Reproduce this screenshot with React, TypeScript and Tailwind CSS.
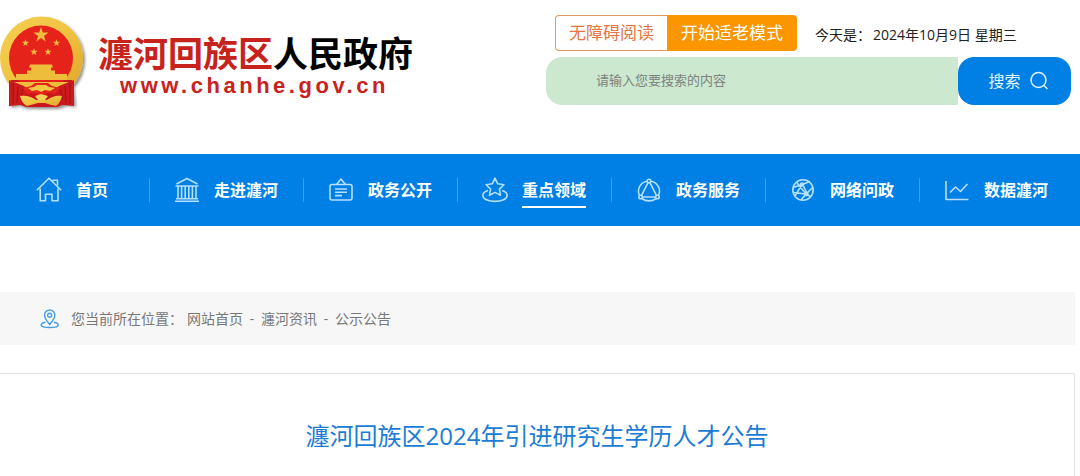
import type { ReactNode } from "react";

interface NavItem {
  label: string;
  icon: ReactNode;
  active?: boolean;
}

const navItems: NavItem[] = [
  {
    label: "首页",
    icon: (
      <>
        <path d="M.8 13.2 13 1.2l12.2 12" />
        <path d="M17 4.5V3.2h4.500V8.500" />
        <path d="M4.2 11.500v12.300h5.300v-6.500h6.500v6.500h6V11.500" />
      </>
    ),
  },
  {
    label: "走进瀍河",
    icon: (
      <>
        <path d="M2.5 7 13 1.5 23.5 7" />
        <path d="M1.5 9h23M2 21.8h22M1 24.2h24" />
        <path d="M4 9v12.5M7.6 9v12.5M11.2 9v12.5M14.8 9v12.5M18.4 9v12.5M22 9v12.5" />
      </>
    ),
  },
  {
    label: "政务公开",
    icon: (
      <>
        <rect x="2" y="7.5" width="22" height="15.5" rx="2" />
        <path d="M8.5 7.5 13 2l4.5 5.5" />
        <path d="M7 12h12M7 15.3h12M7 18.6h7" />
      </>
    ),
  },
  {
    label: "重点领域",
    active: true,
    icon: (
      <>
        <path d="m13 1.2 2.700 5.600 6.200.9-4.500 4.400 1.100 6.200-5.500-2.900-5.500 2.900 1.100-6.200-4.500-4.400 6.200-.9z" />
        <path d="M6 13.500C2.600 14.500.9 16.300.9 18.400c0 3.400 5.200 6 12.100 6s12.100-2.600 12.100-6c0-2.100-1.700-3.900-5.100-4.900" />
      </>
    ),
  },
  {
    label: "政务服务",
    icon: (
      <>
        <path d="M11 4.200A10 10 0 0 0 3.400 18.200M15 4.200A10 10 0 0 1 22.600 18.200M5.800 21.500A12 12 0 0 0 20.200 21.500" />
        <path d="M12 5.700 5.600 18.400M14 5.700l6.400 12.700M6.500 20h13" />
        <circle cx="13" cy="4" r="1.8" />
        <circle cx="4.600" cy="20" r="1.8" />
        <circle cx="21.400" cy="20" r="1.8" />
      </>
    ),
  },
  {
    label: "网络问政",
    icon: (
      <>
        <circle cx="13" cy="13" r="10.2" />
        <path d="M6.500 5.200 16 17l6.800-6.500M3 10.500 12 7.500l8-3M5 19l7-11.500M11 23l5-6 5 2.800M3 15.500l13 1.500M13 8l4 8.500" />
        <circle cx="12" cy="7.500" r="1.5" />
        <circle cx="16.300" cy="17" r="1.6" />
      </>
    ),
  },
  {
    label: "数据瀍河",
    icon: (
      <>
        <path d="M2 4v18.500h22.500" />
        <path d="m6 15.500 5.500-5.500 5 4.500L23.500 7" />
      </>
    ),
  },
];

const crumbs = ["网站首页", "瀍河资讯", "公示公告"];

function Emblem() {
  const star = "M0-10 2.3-3.1 9.5-3.1 3.7 1.2 5.9 8.1 0 3.8-5.9 8.1-3.7 1.2-9.5-3.1-2.3-3.1Z";
  return (
    <svg viewBox="0 0 88 96" className="h-24 w-[88px] shrink-0" aria-hidden="true">
      <defs>
        <linearGradient id="gold" x1="0" y1="0" x2="1" y2="1">
          <stop offset="0" stopColor="#f4d055" />
          <stop offset=".5" stopColor="#f0c23f" />
          <stop offset="1" stopColor="#dda228" />
        </linearGradient>
        <filter id="shade" x="-20%" y="-20%" width="140%" height="140%">
          <feDropShadow dx="2" dy="2" stdDeviation="1.5" floodOpacity=".45" />
        </filter>
      </defs>
      <g filter="url(#shade)">
        <ellipse cx="41.5" cy="42" rx="41.5" ry="41.5" fill="url(#gold)" />
        <path d="M11 64h61l2 25-9-1-8 3H26l-8-3-9 2z" fill="#c8161b" />
      </g>
      <ellipse cx="41" cy="42" rx="32" ry="32.5" fill="#e5231b" />
      <g fill="#eebd3c">
        <path d={star} transform="translate(41 19) scale(.8)" />
        <path d={star} transform="translate(25.5 27) scale(.38)" />
        <path d={star} transform="translate(56.5 27) scale(.38)" />
        <path d={star} transform="translate(34 36) scale(.38)" />
        <path d={star} transform="translate(48 36) scale(.38)" />
        <path d="M30 48.500h22l1 3H29zM31 51.500h20v3H31zM27 54.500h28v3.500H27z" />
        <path d="M16 58h51v6H16z" />
        <path d="M13 66h57l-3 10H16z" />
      </g>
      <path d="M9 64 24 70l5 4-6 8-3 7-11 1zM74 64l-15 6-5 4 6 8 3 7 11 1z" fill="#cf1a1b" />
      <path d="M13 67v21M18 70l-1 17M23 73l-3 11M70 67v21M65 70l1 17M60 73l3 11" fill="none" stroke="#9e1117" />
      <path d="m23 72 8-2 4-3h13l4 3 8 2-5 6-8-1-6 3-6-3-8 1z" fill="#e5231b" />
      <path d="m28 72 6-1 3-2h9l3 2 6 1-5 3-5-1-4 2-4-2-5 1z" fill="#f2c744" />
      <path d="M20 80c7-1 12 1 16 4h11c4-3 9-5 15-4-1 4-3 8-6 10-5-1-8-2-11-3h-7c-4 1-7 2-11 3-4-2-6-6-7-10z" fill="url(#gold)" />
      <path d="m35 80 6-2 7 2-3 4h-7z" fill="#f4d055" />
    </svg>
  );
}

function SearchBar() {
  return (
    <form className="flex h-12" onSubmit={(e) => e.preventDefault()}>
      <input
        type="text"
        aria-label="搜索内容"
        placeholder="请输入您要搜索的内容"
        className="min-w-0 flex-1 rounded-l-2xl bg-[#cce8cf] pl-[50px] text-[13px] text-gray-700 outline-none placeholder:text-[#7c827d]"
      />
      <button
        type="submit"
        className="flex w-[113px] items-center justify-center gap-2 rounded-2xl bg-[#007fe4] pl-2 text-base text-[#e4f4ff]"
      >
        搜索
        <svg viewBox="0 0 20 20" className="size-5" fill="none" stroke="currentColor" strokeWidth="1.5" aria-hidden="true">
          <circle cx="9.5" cy="9" r="7.5" />
          <path d="m15 14.5 3.5 3.5" />
        </svg>
      </button>
    </form>
  );
}

function Header() {
  return (
    <header className="flex items-start justify-between pr-[9px] pb-[42px]">
      <a href="#" className="flex pt-4">
        <Emblem />
        <span className="flex flex-col pt-4 pl-2.5">
          <span className="text-[35px] leading-[44px] font-bold whitespace-nowrap text-[#c8221c]">
            瀍河回族区<span className="text-black">人民政府</span>
          </span>
          <span className="pl-[22px] font-['Liberation_Sans',sans-serif] text-[22px] leading-5 font-bold tracking-[0.16em] text-[#c8221c]">
            www.chanhe.gov.cn
          </span>
        </span>
      </a>

      <div className="w-[525px] pt-[15px]">
        <div className="mb-1.5 flex items-center pl-[9px]">
          <button
            type="button"
            className="h-9 w-28 rounded-l-sm border border-r-0 border-[#e39a62] text-[17px] text-[#e5763f]"
          >
            无障碍阅读
          </button>
          <button type="button" className="h-9 w-[130px] rounded-r-sm bg-[#fb9500] text-[17px] text-white">
            开始适老模式
          </button>
          <p className="flex gap-0.5 pt-1 pl-[18px] text-sm whitespace-nowrap text-[#222]">
            <span>今天是：</span>
            <time dateTime="2024-10-09">2024年10月9日 星期三</time>
          </p>
        </div>
        <SearchBar />
      </div>
    </header>
  );
}

function MainNav() {
  return (
    <nav className="bg-[#007fe4]">
      <ul className="grid h-[72px] grid-cols-[150fr_repeat(5,154fr)_160fr] items-center">
        {navItems.map((item) => (
          <li
            key={item.label}
            className="flex h-6 items-center border-r border-[#3d9eeb] pl-6 first:pl-9 last:border-r-0"
          >
            <a href="#" className="flex items-center gap-3.5 whitespace-nowrap text-white">
              <svg
                viewBox="0 0 26 26"
                className="size-[26px] shrink-0 text-[#b5e0ff]"
                fill="none"
                stroke="currentColor"
                strokeWidth="1.6"
                strokeLinejoin="round"
                aria-hidden="true"
              >
                {item.icon}
              </svg>
              <span
                className={
                  item.active
                    ? "border-y-2 border-t-transparent border-b-white py-1 text-base font-bold"
                    : "text-base font-bold"
                }
              >
                {item.label}
              </span>
            </a>
          </li>
        ))}
      </ul>
    </nav>
  );
}

function Breadcrumb() {
  return (
    <div className="mt-[66px] mr-[5px] flex h-[53px] items-center bg-[#f7f7f7] pl-10 text-sm text-[#777]">
      <svg
        viewBox="0 0 20 20"
        className="mr-[11px] size-5 text-[#459de6]"
        fill="none"
        stroke="currentColor"
        strokeWidth="1.4"
        aria-hidden="true"
      >
        <path d="M9.7 15.5C6.5 11.5 4.5 9.2 4.5 6.2a5.2 5.2 0 0 1 10.4 0c0 3-2 5.3-5.2 9.3Z" />
        <circle cx="9.7" cy="6.2" r="2" />
        <path d="M5.5 13.3c-2.7.5-4.3 1.4-4.3 2.6 0 1.6 3.5 2.6 8.5 2.6s8.500-1 8.500-2.600c0-1.200-1.600-2.100-4.300-2.600" />
      </svg>
      <span className="mr-1">您当前所在位置：</span>
      <ol className="flex">
        {crumbs.map((crumb, i) => (
          <li key={crumb} className="flex">
            {i > 0 && <span className="w-[18px] text-center">-</span>}
            <a href="#">{crumb}</a>
          </li>
        ))}
      </ol>
    </div>
  );
}

export default function App() {
  return (
    <div className="overflow-x-hidden bg-white font-['Open_Sans','Noto_Sans_CJK_SC',sans-serif]">
      <Header />
      <MainNav />
      <Breadcrumb />
      <main className="mt-7 mr-[5px] border-t border-r border-[#e2e2e2] px-4 pt-11 pb-[22px]">
        <h1 className="text-center text-2xl leading-9 text-[#1c7cd5]">瀍河回族区2024年引进研究生学历人才公告</h1>
      </main>
    </div>
  );
}
